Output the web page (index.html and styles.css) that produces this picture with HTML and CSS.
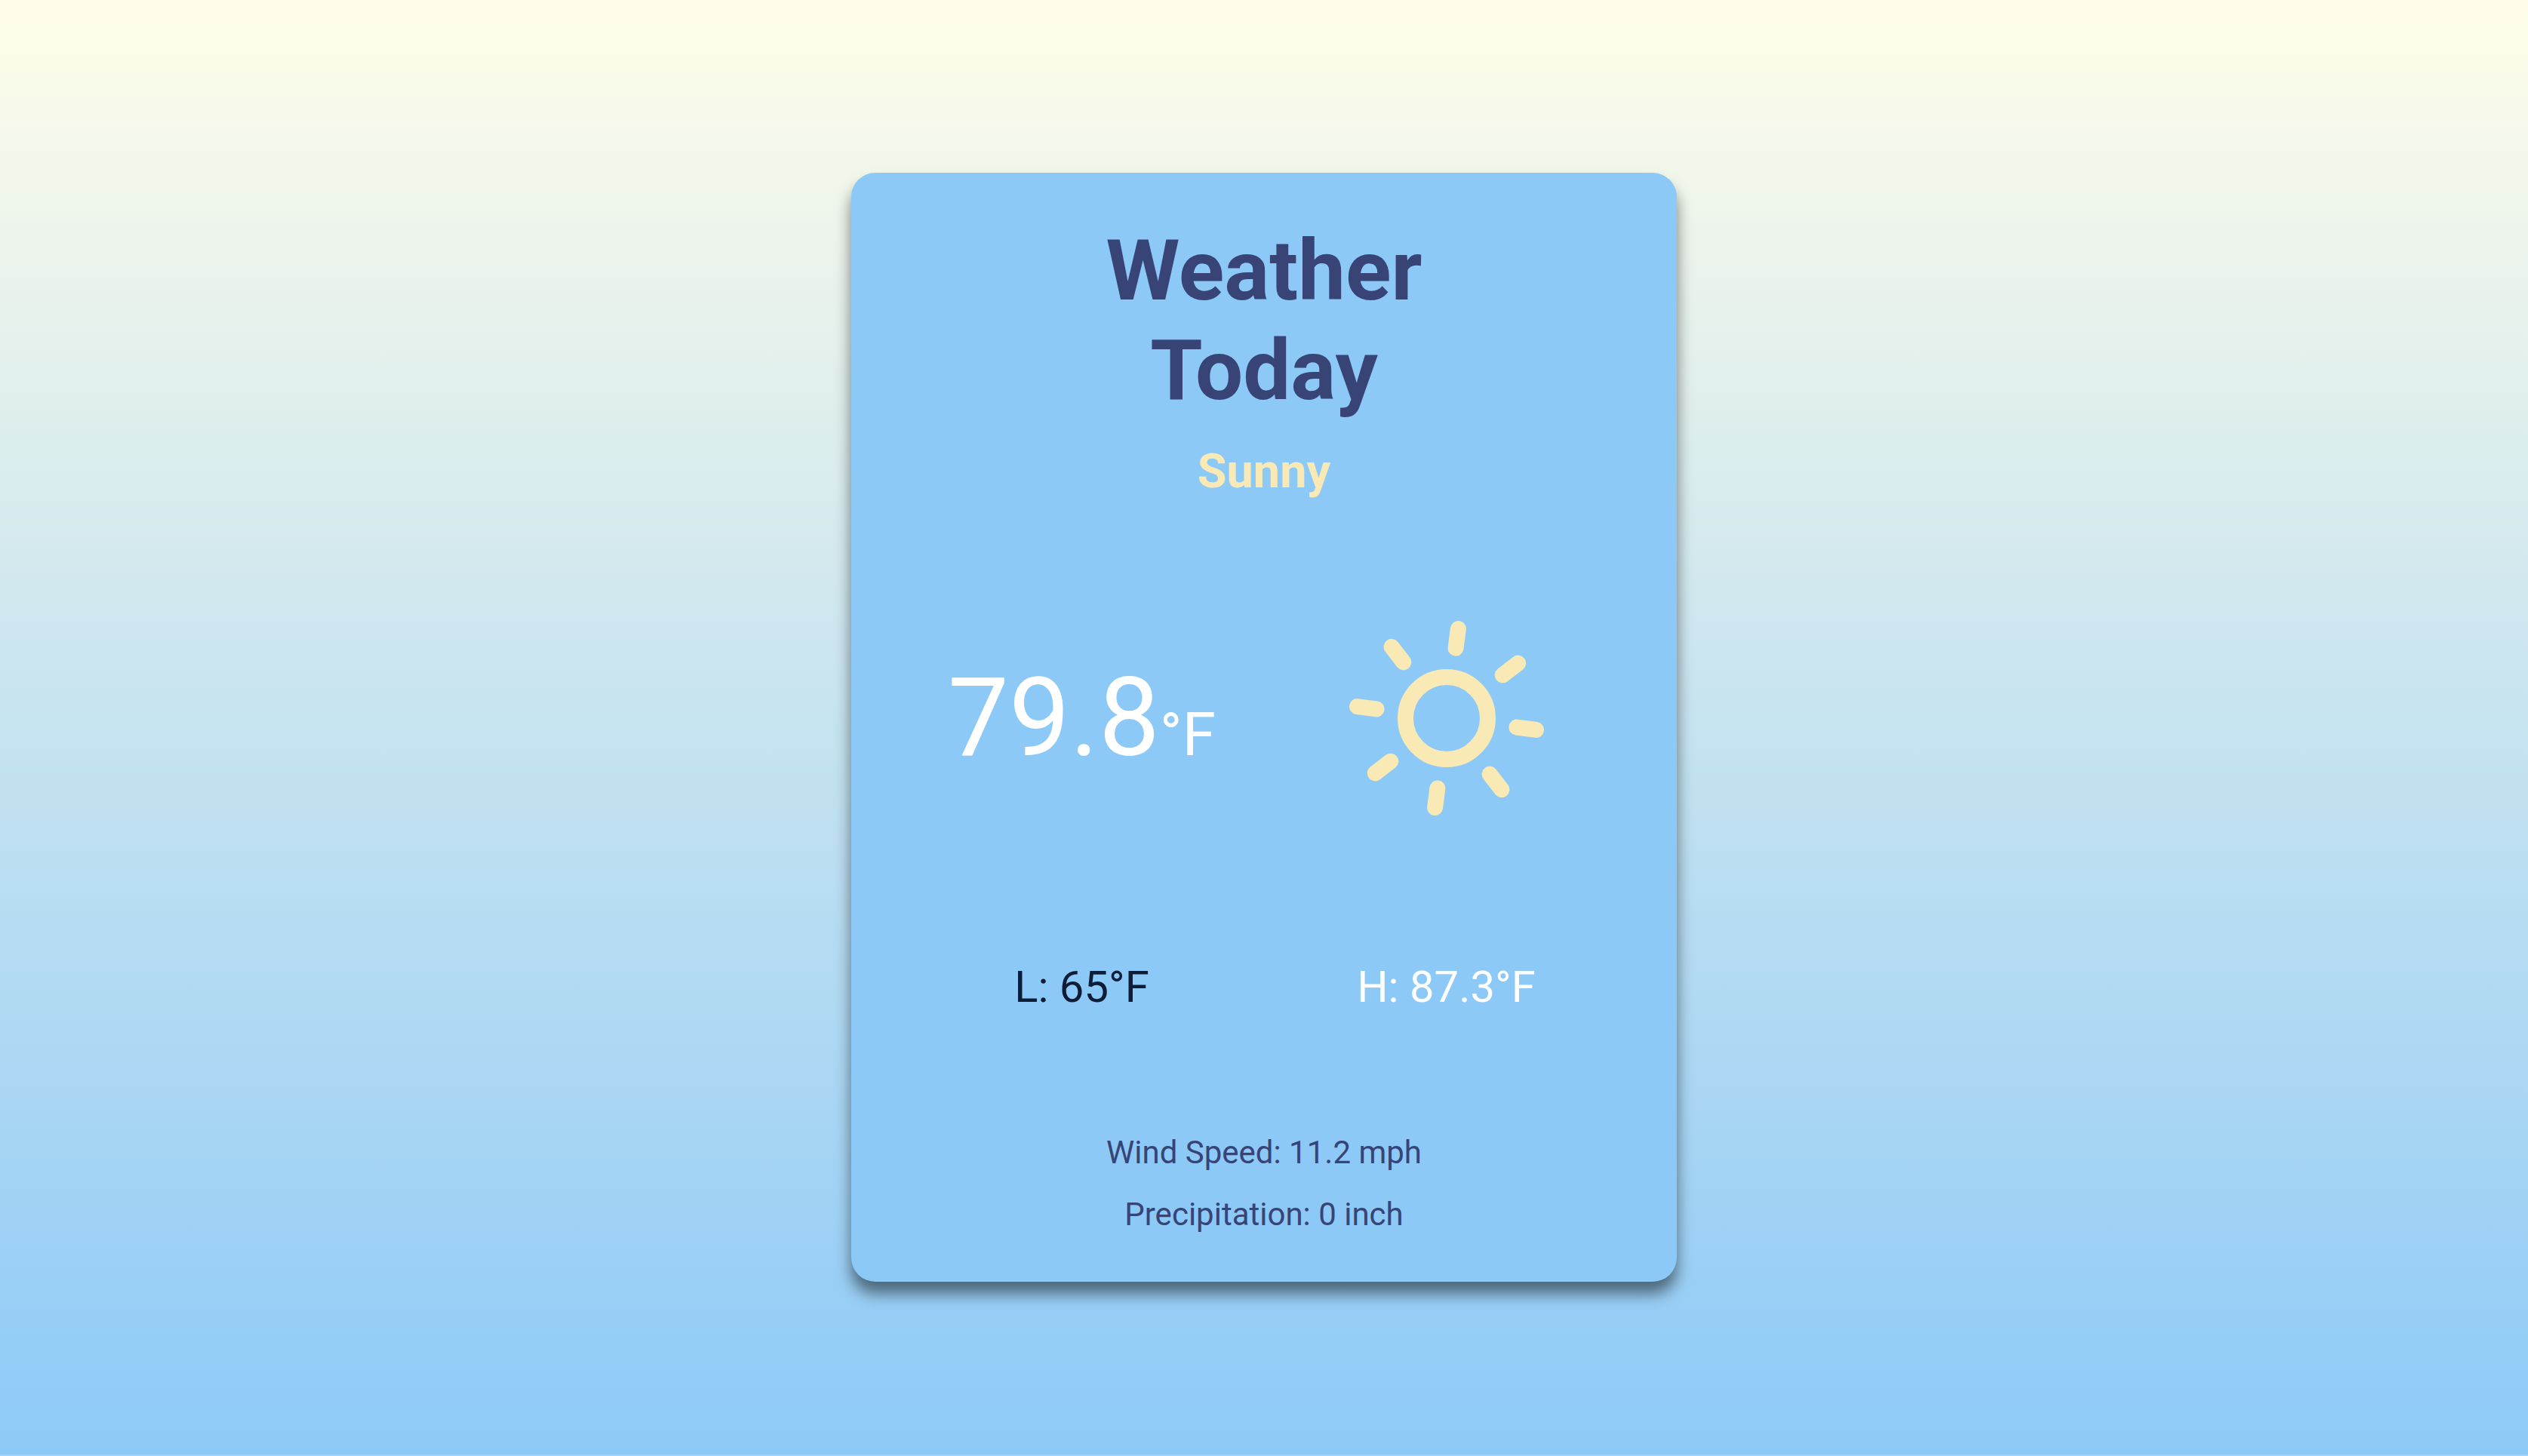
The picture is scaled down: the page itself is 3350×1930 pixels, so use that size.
FILE: index.html
```html
<!DOCTYPE html>
<html lang="en">
<head>
  <meta charset="utf-8">
  <meta name="viewport" content="width=device-width, initial-scale=1">
  <title>Weather Today</title>
  <link rel="stylesheet" href="styles.css">
</head>
<body>
  <main class="card">
    <h1 class="title">Weather<br>Today</h1>
    <h2 class="condition">Sunny</h2>
    <section class="current">
      <p class="temperature">79.8<span class="unit">°F</span></p>
      <svg class="icon" viewBox="-129 -129 258 258" role="img" aria-label="Sunny">
        <circle r="54.5"/>
        <g transform="rotate(7.4)">
          <path d="M0-119.5V-93.7M0 93.7V119.5M-119.5 0H-93.7M93.7 0H119.5"/>
          <path transform="rotate(45)" d="M0-119.5V-93.7M0 93.7V119.5M-119.5 0H-93.7M93.7 0H119.5"/>
        </g>
      </svg>
    </section>
    <section class="range">
      <p class="low">L: 65°F</p>
      <p class="high">H: 87.3°F</p>
    </section>
    <section class="details">
      <p>Wind Speed: 11.2 mph</p>
      <p>Precipitation: 0 inch</p>
    </section>
  </main>
</body>
</html>
```
FILE: styles.css
```css
* {
  box-sizing: border-box;
}

html {
  background: #9fd3f9;
}

body {
  display: flex;
  align-items: center;
  justify-content: center;
  min-height: 100vh;
  margin: 0;
  border-bottom: 2px solid #9fd3f9;
  background: linear-gradient(#fffde9, #8dc9f7);
  font-family: Roboto, sans-serif;
  text-align: center;
}

h1,
h2,
p {
  margin: 0;
}

.card {
  width: 1094px;
  max-width: 100%;
  padding: 64px;
  border-radius: 32px;
  background: #8dc9f7;
  box-shadow: 0 16px 20px rgba(0, 0, 0, 0.5);
}

.title {
  color: #374475;
  font-size: 112px;
  line-height: 132px;
}

.condition {
  margin-top: 30px;
  color: #f9e9b5;
  font-size: 63px;
  line-height: 76px;
}

.current,
.range {
  display: grid;
  grid-template-columns: 1fr 1fr;
  align-items: center;
  justify-items: center;
}

.current {
  margin-top: 160px;
  color: #fff;
}

.temperature {
  font-size: 144px;
  line-height: 170px;
}

.unit {
  font-size: 80px;
  line-height: 1;
}

.icon {
  width: 258px;
  height: 258px;
  fill: none;
  stroke: #f9e9b5;
  stroke-width: 21px;
  stroke-linecap: round;
}

.range {
  margin-top: 192px;
  font-size: 58px;
  line-height: 70px;
}

.low {
  color: #0d1d38;
}

.high {
  color: #fff;
}

.details {
  display: grid;
  gap: 32px;
  margin-top: 160px;
  color: #374475;
  font-size: 42px;
  line-height: 50px;
}
```
